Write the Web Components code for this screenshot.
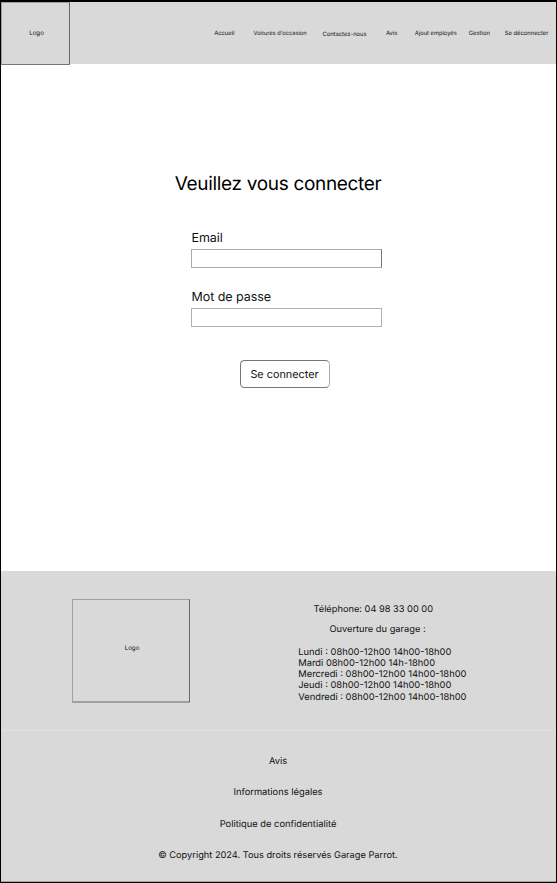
<!DOCTYPE html>
<html lang="fr">
<head>
<meta charset="utf-8">
<title>Garage Parrot – Connexion</title>
<style>
html,body{margin:0;background:#fff}
body{font-family:Inter,"Liberation Sans",sans-serif;color:#000;text-rendering:geometricPrecision}
</style>
</head>
<body>
<garage-page>
  <site-header slot="header">
    <nav-link style="--gap:0px;--w:20.4px">Accueil</nav-link>
    <nav-link style="--gap:19px;--w:54px;--size:5.7px">Voitures d'occasion</nav-link>
    <nav-link style="--gap:14.8px;--w:44.3px;--drop:.5px">Contactez-nous</nav-link>
    <nav-link style="--gap:19.3px;--w:11.4px">Avis</nav-link>
    <nav-link style="--gap:17.5px;--w:42.5px;--size:5.76px">Ajout employés</nav-link>
    <nav-link style="--gap:11.4px;--w:21.1px">Gestion</nav-link>
    <nav-link style="--gap:14.9px;--w:44px;--drop:-.3px">Se déconnecter</nav-link>
  </site-header>
  <login-form></login-form>
  <site-footer slot="footer"></site-footer>
</garage-page>
<script>
const define = (name, html, setup) => customElements.define(name, class extends HTMLElement {
  constructor() {
    super();
    const t = document.createElement('template');
    t.innerHTML = html;
    this.attachShadow({mode: 'open'}).append(t.content.cloneNode(true));
  }
  connectedCallback() { if (setup) setup(this, this.shadowRoot); }
});

define('garage-page', `<style>
:host{display:flex;flex-direction:column;box-sizing:border-box;width:557px;height:883px;overflow:hidden;
border:solid #000;border-width:2px 1px 1px;background:#fff}
main{flex:1}
</style><slot name="header"></slot><main><slot></slot></main><slot name="footer"></slot>`);

define('logo-box', `<style>
:host{display:flex;box-sizing:border-box;align-items:center;justify-content:center;
border:1px solid;border-color:var(--edges,#777);font-size:6.2px;line-height:8px;color:#111}
span{padding-left:2px}
</style><span><slot>Logo</slot></span>`);

define('nav-link', `<style>
:host{display:block;flex:none;margin-left:var(--gap);width:var(--w);padding-top:calc(28px + var(--drop,0px));
font-size:var(--size,5.84px);line-height:8px;white-space:nowrap;color:#111}
</style><slot></slot>`);

define('site-header', `<style>
:host{display:flex;height:62px;background:#d9d9d9}
logo-box{flex:none;width:69px;height:63px;padding-top:1px;--edges:#a0a0a0 #666 #777 #a0a0a0}
nav{display:flex;padding-left:144.2px}
</style><logo-box></logo-box><nav><slot></slot></nav>`);

define('form-field', `<style>
:host{display:block}
label{display:block;font-size:12.5px;letter-spacing:-.05px;line-height:16px;padding-left:.5px;color:#111}
input{display:block;box-sizing:border-box;width:191px;height:19px;margin:var(--space,2px) 0 0;padding:0 4px;
border:1px solid;border-color:var(--edges,#b0b0b0);border-radius:0;background:#fff;outline:0;font:inherit;font-size:11px}
</style><label for="f"></label><input id="f">`, (el, r) => {
  r.querySelector('label').textContent = el.getAttribute('label');
  r.querySelector('input').type = el.getAttribute('type');
});

define('login-form', `<style>
:host{display:block}
h1{margin:0;padding:108px 0 0 173.7px;font-size:19px;letter-spacing:-.32px;font-weight:400;line-height:24px;white-space:nowrap}
form{padding:35.4px 0 0 190px}
.first{--edges:#aaa #777 #aaa #aaa;--space:1.6px}
.second{margin-top:22px}
button{display:block;box-sizing:border-box;width:90px;height:28px;margin:33px 0 0 49px;padding:0 1px 0 0;
border:1px solid #777;border-right-color:#aaa;border-radius:4.5px;background:#fff;color:#111;
font:10.85px/26px Inter,sans-serif;text-rendering:inherit;white-space:nowrap}
</style>
<h1>Veuillez vous connecter</h1>
<form>
  <form-field class="first" label="Email" type="email"></form-field>
  <form-field class="second" label="Mot de passe" type="password"></form-field>
  <button type="button">Se connecter</button>
</form>`);

define('site-footer', `<style>
:host{display:flex;flex-direction:column;box-sizing:border-box;height:311px;background:#d9d9d9;
border-bottom:1px solid #a6a6a6;font-size:9.33px;line-height:11.25px;white-space:nowrap;color:#111}
.top{display:flex;box-sizing:border-box;height:160px;padding-top:28px;border-bottom:1px solid #e0e0e0}
logo-box{width:118px;height:104px;margin-left:71px;padding-bottom:4px;border-bottom-width:2px;--edges:#a0a0a0 #666 #a0a0a0 #a0a0a0}
.info{margin-left:108.3px;padding-top:5px}
p{margin:0}
.tel{padding-left:15.2px;font-size:9.25px}
.open{padding:9px 0 0 31.1px;font-size:9.28px}
.hours{padding-top:11.2px}
.links{display:grid;justify-items:center;align-content:start;row-gap:20px;padding:25px 1px 0 0}
.links .copy{font-size:9.24px}
</style>
<div class="top">
  <logo-box></logo-box>
  <div class="info">
    <p class="tel">Téléphone: 04 98 33 00 00</p>
    <p class="open">Ouverture du garage :</p>
    <div class="hours">
      <p>Lundi : 08h00-12h00 14h00-18h00</p>
      <p>Mardi 08h00-12h00 14h-18h00</p>
      <p>Mercredi : 08h00-12h00 14h00-18h00</p>
      <p>Jeudi : 08h00-12h00 14h00-18h00</p>
      <p>Vendredi : 08h00-12h00 14h00-18h00</p>
    </div>
  </div>
</div>
<div class="links">
  <span>Avis</span>
  <span>Informations légales</span>
  <span>Politique de confidentialité</span>
  <span class="copy">© Copyright 2024. Tous droits réservés Garage Parrot.</span>
</div>`);
</script>
</body>
</html>
